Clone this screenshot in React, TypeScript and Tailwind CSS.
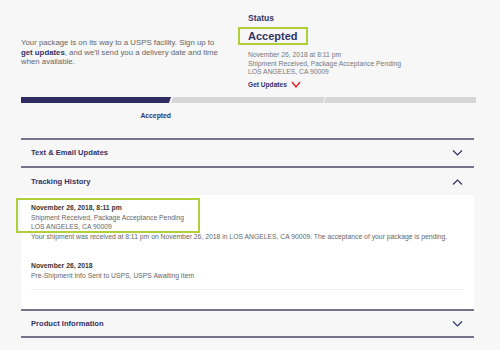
import React from 'react';

const font = { fontFamily: '"Liberation Sans", Arial, sans-serif' };

const Chevron = ({ up = false, className = '' }: { up?: boolean; className?: string }) => (
  <svg width="11" height="6" viewBox="0 0 11 6" className={className}>
    <polyline
      points={up ? '1,5.5 5.5,1 10,5.5' : '1,0.5 5.5,5 10,0.5'}
      fill="none"
      stroke="#333366"
      strokeWidth="1.2"
    />
  </svg>
);

const SectionRow = ({ title, up = false, h }: { title: string; up?: boolean; h: string }) => (
  <div className={`flex items-center justify-between pl-[10px] pr-[11px] ${h}`}>
    <span className="text-[7.6px] font-bold text-[#333366]">{title}</span>
    <Chevron up={up} />
  </div>
);

const App: React.FC = () => {
  return (
    <div style={font} className="w-[500px] h-[350px] bg-[#f7f7f7] overflow-hidden px-[21px]">
      {/* Header */}
      <div className="flex h-[97px]">
        <div className="w-[217px] pt-[38px]">
          <div className="text-[7.8px] leading-[9.5px] text-[#666] whitespace-nowrap">
            <div>Your package is on its way to a USPS facility. Sign up to</div>
            <div>
              <span className="font-bold text-[#333366]">get updates</span>, and we'll send you a delivery date and time
            </div>
            <div>when available.</div>
          </div>
        </div>
        <div className="pt-[14px]">
          <div className="pl-[10px] text-[8.5px] leading-[9px] font-bold text-[#333366]">Status</div>
          <div className="mt-[3px] inline-flex items-center h-[18px] border-2 border-[#b1cf3a] px-[8px] text-[11px] font-bold text-[#333366]">
            Accepted
          </div>
          <div className="pl-[10px] mt-[4px] text-[6.8px] leading-[8.5px] text-[#777]">
            <div>November 26, 2018 at 8:11 pm</div>
            <div>Shipment Received, Package Acceptance Pending</div>
            <div>LOS ANGELES, CA 90009</div>
          </div>
          <div className="pl-[10px] mt-[4px] flex items-center gap-[4px] h-[8px]">
            <span className="text-[6.6px] font-bold text-[#333366]">Get Updates</span>
            <svg width="10" height="7" viewBox="0 0 10 7">
              <polyline points="1,1 5,6 9,1" fill="none" stroke="#e71921" strokeWidth="1.3" />
            </svg>
          </div>
        </div>
      </div>

      {/* Progress */}
      <div className="flex gap-[2px] h-[6px] w-[455px] overflow-hidden">
        <div className="flex-1 -ml-[3px] -skew-x-[20deg] bg-[#2f2c62]" />
        <div className="flex-1 -skew-x-[20deg] bg-[#d6d6d6]" />
        <div className="flex-1 -skew-x-[20deg] bg-[#d6d6d6] -mr-[1px]" />
      </div>
      <div className="grid grid-cols-3 w-[453px] mt-[8px]">
        <div className="text-right pr-[1px] text-[6.8px] font-bold text-[#333366]">Accepted</div>
      </div>

      {/* Sections */}
      <div className="mt-[17px] w-[453px]">
        <div className="border-t-2 border-[#76738d]">
          <SectionRow title="Text & Email Updates" h="h-[26px]" />
        </div>
        <div className="border-t-2 border-[#76738d]">
          <SectionRow title="Tracking History" up h="h-[27px]" />
        </div>
        <div className="relative bg-white h-[114px] px-[10px] pt-[8px]">
          <div className="absolute left-[-5px] top-[3px] w-[184px] h-[35px] border-2 border-[#b1cf3a]" />
          <div className="text-[6.8px] leading-[9.5px] text-[#666]">
            <div className="font-bold text-[#333]">November 26, 2018, 8:11 pm</div>
            <div>Shipment Received, Package Acceptance Pending</div>
            <div>LOS ANGELES, CA 90009</div>
            <div className="whitespace-nowrap">
              Your shipment was received at 8:11 pm on November 26, 2018 in LOS ANGELES, CA 90009. The acceptance of
              your package is pending.
            </div>
          </div>
          <div className="mt-[20px] text-[6.8px] leading-[9.5px] text-[#666]">
            <div className="font-bold text-[#333]">November 26, 2018</div>
            <div>Pre-Shipment Info Sent to USPS, USPS Awaiting Item</div>
          </div>
          <div className="mt-[9px] h-px bg-[#eeeeee]" />
        </div>
        <div className="border-t-2 border-b-2 border-[#76738d]">
          <SectionRow title="Product Information" h="h-[25px]" />
        </div>
      </div>
    </div>
  );
};

export default App;
